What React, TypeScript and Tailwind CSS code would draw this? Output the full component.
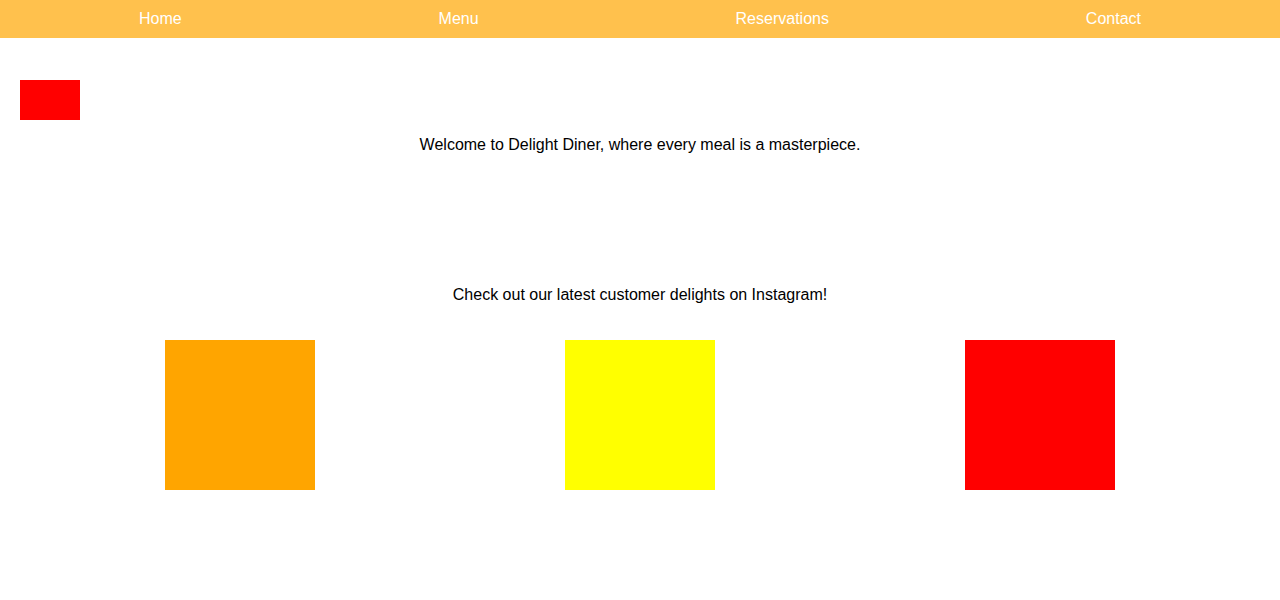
import React from 'react';

const links = ['Home', 'Menu', 'Reservations', 'Contact'];
const photos = ['bg-[#ffa500]', 'bg-[#ffff00]', 'bg-[#ff0000]'];

const App: React.FC = () => {
    return (
        <div className="min-h-[600px] bg-white font-['Liberation_Sans',Arial,sans-serif] text-base text-black">
            {/* Top nav */}
            <nav className="h-[38px] bg-[#ffc14d] flex items-center justify-between px-[139px]">
                {links.map(link => (
                    <a key={link} href="#" className="text-white leading-[18px]">
                        {link}
                    </a>
                ))}
            </nav>

            <header className="pt-[42px] px-5">
                <div className="w-[60px] h-[40px] bg-[#ff0000]"></div>
                <p className="mt-4 text-center leading-[18px]">
                    Welcome to Delight Diner, where every meal is a masterpiece.
                </p>
            </header>

            <section className="mt-[132px]">
                <p className="text-center leading-[18px]">Check out our latest customer delights on Instagram!</p>
                <div className="mt-[36px] mx-auto w-[1200px] grid grid-cols-3">
                    {photos.map((c, i) => (
                        <div key={i} className="flex justify-center">
                            <div className={`w-[150px] h-[150px] ${c}`}></div>
                        </div>
                    ))}
                </div>
            </section>
        </div>
    );
};

export default App;
